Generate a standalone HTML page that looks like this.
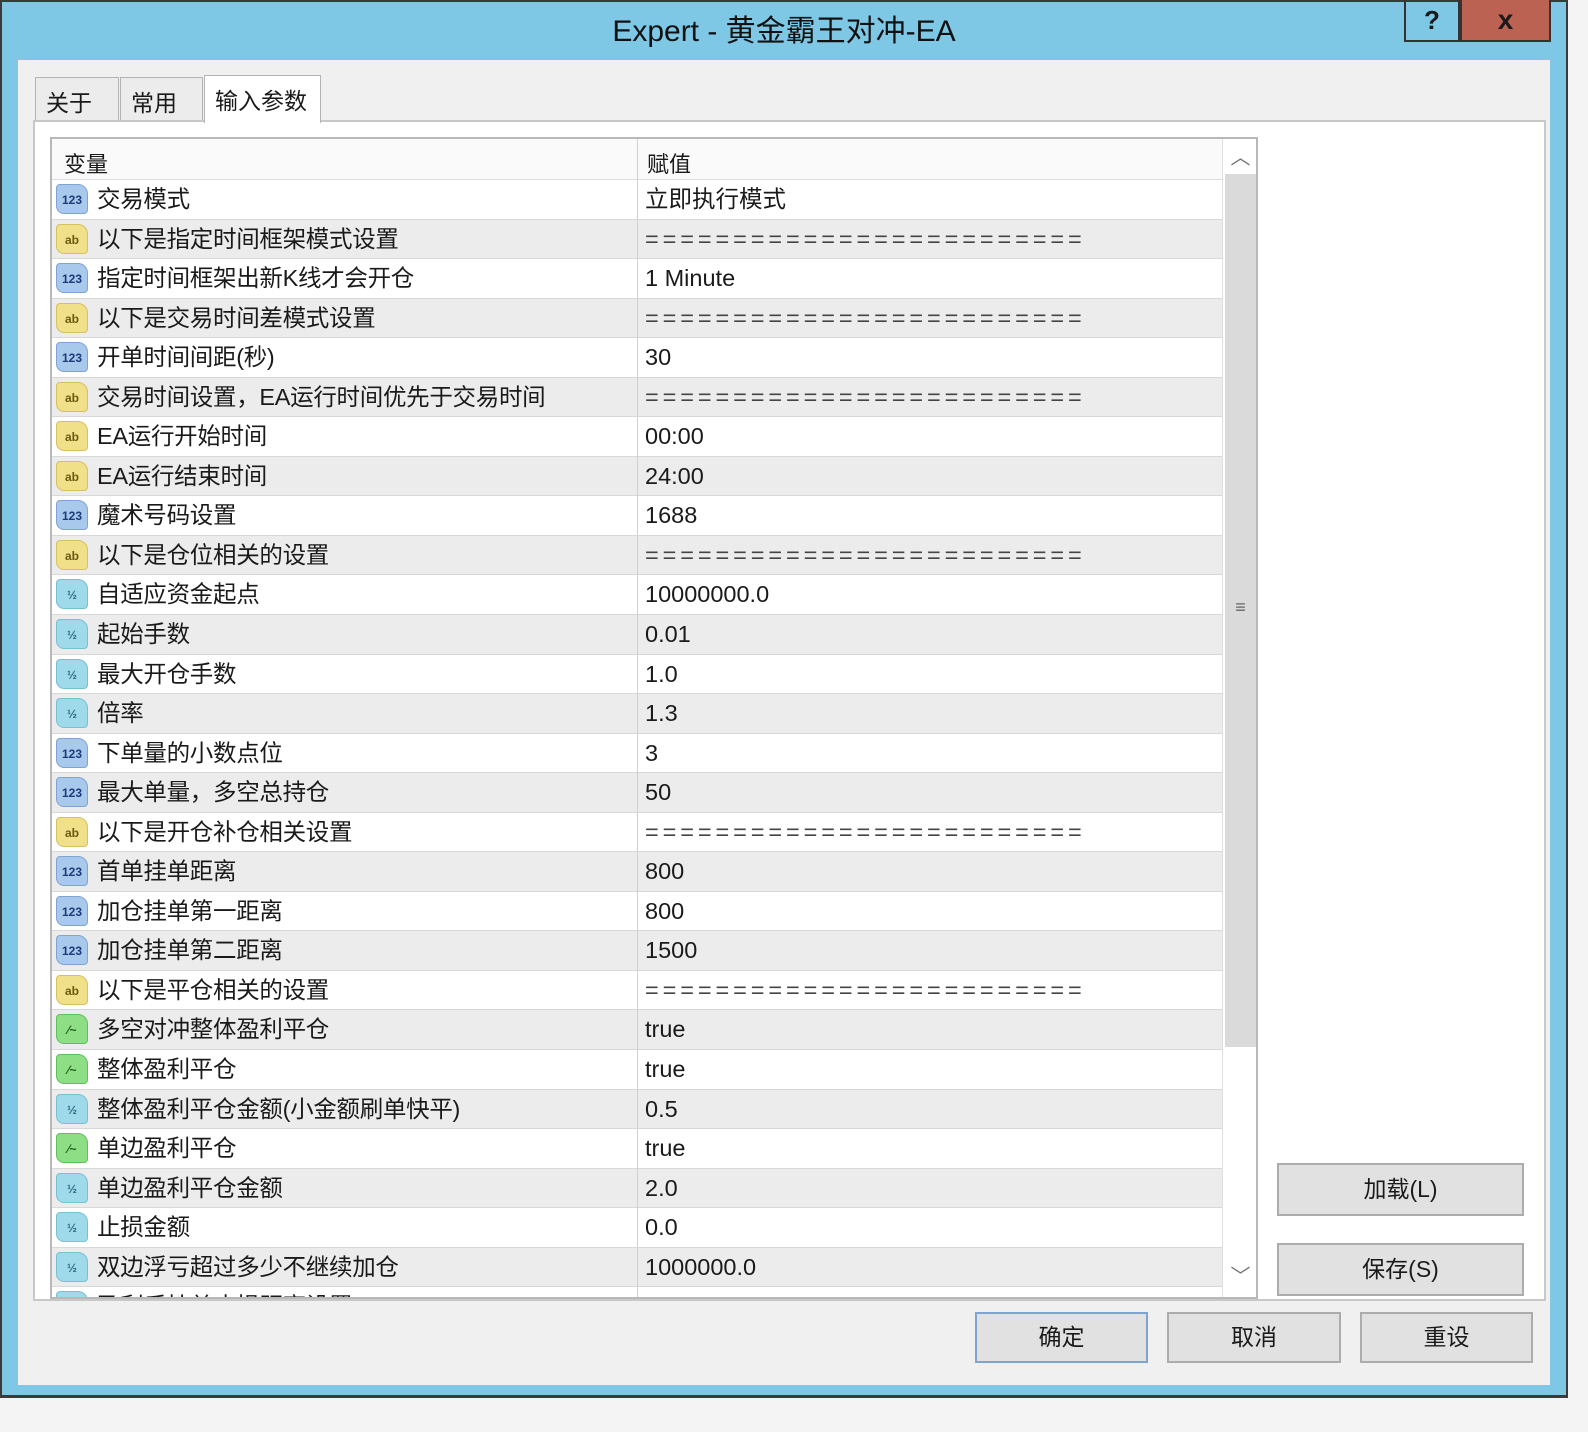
<!DOCTYPE html>
<html><head><meta charset="utf-8"><style>
*{margin:0;padding:0;box-sizing:border-box}
body{width:1588px;height:1432px;position:relative;overflow:hidden;background:#f4f4f4;font-family:"Liberation Sans","Noto Sans CJK SC",sans-serif;color:#1a1a1a}
.a{position:absolute}
#win{left:0;top:0;width:1568px;height:1398px;background:#7ec8e6;border:2px solid #3a3a3a;border-bottom-width:3px}
#title{left:0;top:6px;width:1568px;text-align:center;font-size:30px;color:#111}
#client{left:18px;top:60px;width:1532px;height:1325px;background:#f0f0f0}
.tab{top:77px;height:44px;background:#ececec;border:1px solid #b4b4b4;border-bottom:none;font-size:23px;padding:6px 0 0 10px}
#panel{left:33px;top:120px;width:1513px;height:1181px;background:#fff;border:2px solid #c8c8c8}
#tbl{left:50px;top:137px;width:1208px;height:1162px;border:2px solid #b8b8b8;background:#fff;overflow:hidden}
#hdr{left:0;top:0;width:1172px;height:41px;background:#fafafa;border-bottom:1px solid #ddd;font-size:22px}
#rows{left:0;top:41px;width:1172px}
.r{height:39.55px;position:relative;border-bottom:1px solid #d8d8d8;font-size:23.5px;line-height:38px}
.r:nth-child(even){background:#ececec}
.r .n{position:absolute;left:45px;top:0;white-space:nowrap;letter-spacing:-0.3px}
.r .v{position:absolute;left:593px;top:0;white-space:nowrap}
.r .ic{position:absolute;left:4px;top:4px;width:32px;height:30px;border-radius:4px 10px 4px 8px;font-size:12px;font-weight:bold;line-height:30px;text-align:center}
.i1{background:#a8c8ec;color:#1b3b7a;border:1px solid #7ea4d4}
.i2{background:#f0e08a;color:#6a5a10;border:1px solid #d6c060}
.i3{background:#9fdaea;color:#2a6a80;border:1px solid #78c0d4}
.i4{background:#8ede86;color:#1b5b1b;border:1px solid #5ec05a}
.eq{letter-spacing:3.9px;color:#444}
#col{left:585px;top:0;width:1px;height:1162px;background:#d0d0d0}
#sb{left:1170px;top:0;width:36px;height:1162px;background:#fff;border-left:1px solid #e0e0e0}
.btn{background:#e1e1e1;border:2px solid #acacac;font-size:23px;text-align:center}
</style></head><body>
<div id="win" class="a"></div>
<div id="title" class="a">Expert - 黄金霸王对冲-EA</div>
<div class="a" style="left:1404px;top:0;width:56px;height:42px;border:2px solid #333;border-top:none;text-align:center;font-size:26px;font-weight:bold;line-height:40px">?</div>
<div class="a" style="left:1460px;top:0;width:91px;height:42px;background:#bb6252;border:2px solid #333;border-top:none;text-align:center;font-size:28px;font-weight:bold;line-height:40px">x</div>
<div id="client" class="a"></div>
<div class="a tab" style="left:35px;width:84px">关于</div>
<div class="a tab" style="left:120px;width:83px">常用</div>
<div id="panel" class="a"></div>
<div class="a tab" style="left:204px;top:75px;width:117px;height:48px;background:#fff;z-index:2">输入参数</div>
<div id="tbl" class="a">
<div id="hdr" class="a"><span class="a" style="left:12px;top:8px">变量</span><span class="a" style="left:595px;top:8px">赋值</span></div>
<div id="rows" class="a">
<div class="r"><div class="ic i1">123</div><span class="n">交易模式</span><span class="v">立即执行模式</span></div>
<div class="r"><div class="ic i2">ab</div><span class="n">以下是指定时间框架模式设置</span><span class="v eq">=========================</span></div>
<div class="r"><div class="ic i1">123</div><span class="n">指定时间框架出新K线才会开仓</span><span class="v">1 Minute</span></div>
<div class="r"><div class="ic i2">ab</div><span class="n">以下是交易时间差模式设置</span><span class="v eq">=========================</span></div>
<div class="r"><div class="ic i1">123</div><span class="n">开单时间间距(秒)</span><span class="v">30</span></div>
<div class="r"><div class="ic i2">ab</div><span class="n">交易时间设置，EA运行时间优先于交易时间</span><span class="v eq">=========================</span></div>
<div class="r"><div class="ic i2">ab</div><span class="n">EA运行开始时间</span><span class="v">00:00</span></div>
<div class="r"><div class="ic i2">ab</div><span class="n">EA运行结束时间</span><span class="v">24:00</span></div>
<div class="r"><div class="ic i1">123</div><span class="n">魔术号码设置</span><span class="v">1688</span></div>
<div class="r"><div class="ic i2">ab</div><span class="n">以下是仓位相关的设置</span><span class="v eq">=========================</span></div>
<div class="r"><div class="ic i3">½</div><span class="n">自适应资金起点</span><span class="v">10000000.0</span></div>
<div class="r"><div class="ic i3">½</div><span class="n">起始手数</span><span class="v">0.01</span></div>
<div class="r"><div class="ic i3">½</div><span class="n">最大开仓手数</span><span class="v">1.0</span></div>
<div class="r"><div class="ic i3">½</div><span class="n">倍率</span><span class="v">1.3</span></div>
<div class="r"><div class="ic i1">123</div><span class="n">下单量的小数点位</span><span class="v">3</span></div>
<div class="r"><div class="ic i1">123</div><span class="n">最大单量，多空总持仓</span><span class="v">50</span></div>
<div class="r"><div class="ic i2">ab</div><span class="n">以下是开仓补仓相关设置</span><span class="v eq">=========================</span></div>
<div class="r"><div class="ic i1">123</div><span class="n">首单挂单距离</span><span class="v">800</span></div>
<div class="r"><div class="ic i1">123</div><span class="n">加仓挂单第一距离</span><span class="v">800</span></div>
<div class="r"><div class="ic i1">123</div><span class="n">加仓挂单第二距离</span><span class="v">1500</span></div>
<div class="r"><div class="ic i2">ab</div><span class="n">以下是平仓相关的设置</span><span class="v eq">=========================</span></div>
<div class="r"><div class="ic i4">⁄~</div><span class="n">多空对冲整体盈利平仓</span><span class="v">true</span></div>
<div class="r"><div class="ic i4">⁄~</div><span class="n">整体盈利平仓</span><span class="v">true</span></div>
<div class="r"><div class="ic i3">½</div><span class="n">整体盈利平仓金额(小金额刷单快平)</span><span class="v">0.5</span></div>
<div class="r"><div class="ic i4">⁄~</div><span class="n">单边盈利平仓</span><span class="v">true</span></div>
<div class="r"><div class="ic i3">½</div><span class="n">单边盈利平仓金额</span><span class="v">2.0</span></div>
<div class="r"><div class="ic i3">½</div><span class="n">止损金额</span><span class="v">0.0</span></div>
<div class="r"><div class="ic i3">½</div><span class="n">双边浮亏超过多少不继续加仓</span><span class="v">1000000.0</span></div>
<div class="r"><div class="ic i3">½</div><span class="n">盈利后挂单止损距离设置</span><span class="v"></span></div>
</div>
<div id="col" class="a"></div>
<div id="sb" class="a">
<div class="a" style="left:0;top:0;width:35px;height:35px;text-align:center;font-size:20px;color:#777;line-height:38px">︿</div>
<div class="a" style="left:2px;top:35px;width:31px;height:873px;background:#dadada"></div>
<div class="a" style="left:0;top:458px;width:35px;text-align:center;font-size:18px;color:#666">≡</div>
<div class="a" style="left:0;top:1123px;width:35px;height:35px;text-align:center;font-size:20px;color:#777;line-height:30px">﹀</div>
</div>
</div>
<div class="a btn" style="left:1277px;top:1163px;width:247px;height:53px;line-height:49px">加载(L)</div>
<div class="a btn" style="left:1277px;top:1243px;width:247px;height:53px;line-height:49px">保存(S)</div>
<div class="a btn" style="left:975px;top:1312px;width:173px;height:51px;line-height:47px;border-color:#7ea4d4">确定</div>
<div class="a btn" style="left:1167px;top:1312px;width:174px;height:51px;line-height:47px">取消</div>
<div class="a btn" style="left:1360px;top:1312px;width:173px;height:51px;line-height:47px">重设</div>
</body></html>
